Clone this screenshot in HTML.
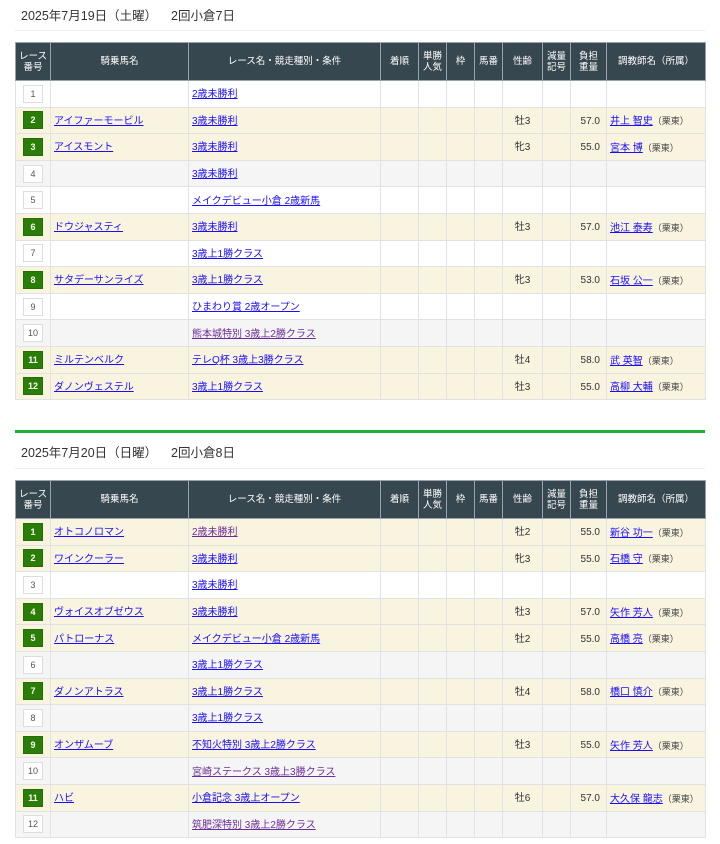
<!DOCTYPE html>
<html><head><meta charset="utf-8">
<style>
*{box-sizing:border-box}
body{margin:0;background:#fff;font-family:"Liberation Sans","Noto Sans CJK JP",sans-serif;color:#333;width:720px;height:844px;overflow:hidden;position:relative}
.title{position:absolute;left:21px;font-size:12.5px;color:#333}
.hr{position:absolute;left:15px;width:690px;height:1px;background:#eee}
.green{position:absolute;left:15px;width:690px;height:3px;background:#1fae3a}
table{position:absolute;left:15px;width:690px;border-collapse:collapse;table-layout:fixed;font-size:10px}
th{background:#37474f;color:#fff;font-weight:normal;height:38px;border:1px solid #9aa3a7;line-height:11px;padding:0;font-size:9.5px;vertical-align:middle}
td{height:26.6px;border:1px solid #e2e2e2;padding:3px 3px 0;white-space:nowrap;overflow:hidden;vertical-align:middle;line-height:14px}
td.n{padding:0}
tr.h td{background:#f8f4e0}
tr.w td{background:#fff}
tr.g td{background:#f5f5f5}
.n{text-align:center}
.b{display:inline-block;vertical-align:middle;width:20px;height:18px;line-height:16px;text-align:center;font-size:9px;border:1px solid #ddd;background:#fff;color:#555}
tr.h .b{background:#2a7d07;color:#fff;border-color:#256e06;font-weight:bold}
a{color:#1a0dff;text-decoration:underline}
a.v{color:#6b2d99}
.c{text-align:center}
.r{text-align:right;padding-right:6px}
.s{color:#444;font-size:9px}
</style></head><body>
<div class="title" style="top:5px">2025年7月19日（土曜）&nbsp;&nbsp;&nbsp;&nbsp;2回小倉7日</div>
<div class="hr" style="top:30px"></div>
<table style="top:42px">
<colgroup><col style="width:35px"><col style="width:138px"><col style="width:192px"><col style="width:38px"><col style="width:28px"><col style="width:28px"><col style="width:28px"><col style="width:40px"><col style="width:28px"><col style="width:36px"><col style="width:99px"></colgroup>
<tr><th>レース<br>番号</th><th>騎乗馬名</th><th>レース名・競走種別・条件</th><th>着順</th><th>単勝<br>人気</th><th>枠</th><th>馬番</th><th>性齢</th><th>減量<br>記号</th><th>負担<br>重量</th><th>調教師名（所属）</th></tr>
<tr class="w"><td class="n"><span class="b">1</span></td><td></td><td><a>2歳未勝利</a></td><td></td><td></td><td></td><td></td><td></td><td></td><td></td><td></td></tr>
<tr class="h"><td class="n"><span class="b">2</span></td><td><a>アイファーモービル</a></td><td><a>3歳未勝利</a></td><td></td><td></td><td></td><td></td><td class="c">牡3</td><td></td><td class="r">57.0</td><td><a>井上 智史</a><span class="s">（栗東）</span></td></tr>
<tr class="h"><td class="n"><span class="b">3</span></td><td><a>アイスモント</a></td><td><a>3歳未勝利</a></td><td></td><td></td><td></td><td></td><td class="c">牝3</td><td></td><td class="r">55.0</td><td><a>宮本 博</a><span class="s">（栗東）</span></td></tr>
<tr class="g"><td class="n"><span class="b">4</span></td><td></td><td><a>3歳未勝利</a></td><td></td><td></td><td></td><td></td><td></td><td></td><td></td><td></td></tr>
<tr class="w"><td class="n"><span class="b">5</span></td><td></td><td><a>メイクデビュー小倉 2歳新馬</a></td><td></td><td></td><td></td><td></td><td></td><td></td><td></td><td></td></tr>
<tr class="h"><td class="n"><span class="b">6</span></td><td><a>ドウジャスティ</a></td><td><a>3歳未勝利</a></td><td></td><td></td><td></td><td></td><td class="c">牡3</td><td></td><td class="r">57.0</td><td><a>池江 泰寿</a><span class="s">（栗東）</span></td></tr>
<tr class="w"><td class="n"><span class="b">7</span></td><td></td><td><a>3歳上1勝クラス</a></td><td></td><td></td><td></td><td></td><td></td><td></td><td></td><td></td></tr>
<tr class="h"><td class="n"><span class="b">8</span></td><td><a>サタデーサンライズ</a></td><td><a>3歳上1勝クラス</a></td><td></td><td></td><td></td><td></td><td class="c">牝3</td><td></td><td class="r">53.0</td><td><a>石坂 公一</a><span class="s">（栗東）</span></td></tr>
<tr class="w"><td class="n"><span class="b">9</span></td><td></td><td><a>ひまわり賞 2歳オープン</a></td><td></td><td></td><td></td><td></td><td></td><td></td><td></td><td></td></tr>
<tr class="g"><td class="n"><span class="b">10</span></td><td></td><td><a class="v">熊本城特別 3歳上2勝クラス</a></td><td></td><td></td><td></td><td></td><td></td><td></td><td></td><td></td></tr>
<tr class="h"><td class="n"><span class="b">11</span></td><td><a>ミルテンベルク</a></td><td><a>テレQ杯 3歳上3勝クラス</a></td><td></td><td></td><td></td><td></td><td class="c">牡4</td><td></td><td class="r">58.0</td><td><a>武 英智</a><span class="s">（栗東）</span></td></tr>
<tr class="h"><td class="n"><span class="b">12</span></td><td><a>ダノンヴェステル</a></td><td><a>3歳上1勝クラス</a></td><td></td><td></td><td></td><td></td><td class="c">牡3</td><td></td><td class="r">55.0</td><td><a>高柳 大輔</a><span class="s">（栗東）</span></td></tr>
</table>

<div class="green" style="top:430px"></div>
<div class="title" style="top:442px">2025年7月20日（日曜）&nbsp;&nbsp;&nbsp;&nbsp;2回小倉8日</div>
<div class="hr" style="top:468px"></div>
<table style="top:480px">
<colgroup><col style="width:35px"><col style="width:138px"><col style="width:192px"><col style="width:38px"><col style="width:28px"><col style="width:28px"><col style="width:28px"><col style="width:40px"><col style="width:28px"><col style="width:36px"><col style="width:99px"></colgroup>
<tr><th>レース<br>番号</th><th>騎乗馬名</th><th>レース名・競走種別・条件</th><th>着順</th><th>単勝<br>人気</th><th>枠</th><th>馬番</th><th>性齢</th><th>減量<br>記号</th><th>負担<br>重量</th><th>調教師名（所属）</th></tr>
<tr class="h"><td class="n"><span class="b">1</span></td><td><a>オトコノロマン</a></td><td><a class="v">2歳未勝利</a></td><td></td><td></td><td></td><td></td><td class="c">牡2</td><td></td><td class="r">55.0</td><td><a>新谷 功一</a><span class="s">（栗東）</span></td></tr>
<tr class="h"><td class="n"><span class="b">2</span></td><td><a>ワインクーラー</a></td><td><a>3歳未勝利</a></td><td></td><td></td><td></td><td></td><td class="c">牝3</td><td></td><td class="r">55.0</td><td><a>石橋 守</a><span class="s">（栗東）</span></td></tr>
<tr class="w"><td class="n"><span class="b">3</span></td><td></td><td><a>3歳未勝利</a></td><td></td><td></td><td></td><td></td><td></td><td></td><td></td><td></td></tr>
<tr class="h"><td class="n"><span class="b">4</span></td><td><a>ヴォイスオブゼウス</a></td><td><a>3歳未勝利</a></td><td></td><td></td><td></td><td></td><td class="c">牡3</td><td></td><td class="r">57.0</td><td><a>矢作 芳人</a><span class="s">（栗東）</span></td></tr>
<tr class="h"><td class="n"><span class="b">5</span></td><td><a>パトローナス</a></td><td><a>メイクデビュー小倉 2歳新馬</a></td><td></td><td></td><td></td><td></td><td class="c">牡2</td><td></td><td class="r">55.0</td><td><a>高橋 亮</a><span class="s">（栗東）</span></td></tr>
<tr class="g"><td class="n"><span class="b">6</span></td><td></td><td><a>3歳上1勝クラス</a></td><td></td><td></td><td></td><td></td><td></td><td></td><td></td><td></td></tr>
<tr class="h"><td class="n"><span class="b">7</span></td><td><a>ダノンアトラス</a></td><td><a>3歳上1勝クラス</a></td><td></td><td></td><td></td><td></td><td class="c">牡4</td><td></td><td class="r">58.0</td><td><a>橋口 慎介</a><span class="s">（栗東）</span></td></tr>
<tr class="g"><td class="n"><span class="b">8</span></td><td></td><td><a>3歳上1勝クラス</a></td><td></td><td></td><td></td><td></td><td></td><td></td><td></td><td></td></tr>
<tr class="h"><td class="n"><span class="b">9</span></td><td><a>オンザムーブ</a></td><td><a>不知火特別 3歳上2勝クラス</a></td><td></td><td></td><td></td><td></td><td class="c">牡3</td><td></td><td class="r">55.0</td><td><a>矢作 芳人</a><span class="s">（栗東）</span></td></tr>
<tr class="g"><td class="n"><span class="b">10</span></td><td></td><td><a class="v">宮崎ステークス 3歳上3勝クラス</a></td><td></td><td></td><td></td><td></td><td></td><td></td><td></td><td></td></tr>
<tr class="h"><td class="n"><span class="b">11</span></td><td><a>ハビ</a></td><td><a>小倉記念 3歳上オープン</a></td><td></td><td></td><td></td><td></td><td class="c">牡6</td><td></td><td class="r">57.0</td><td><a>大久保 龍志</a><span class="s">（栗東）</span></td></tr>
<tr class="g"><td class="n"><span class="b">12</span></td><td></td><td><a class="v">筑肥深特別 3歳上2勝クラス</a></td><td></td><td></td><td></td><td></td><td></td><td></td><td></td><td></td></tr>
</table>
</body></html>
